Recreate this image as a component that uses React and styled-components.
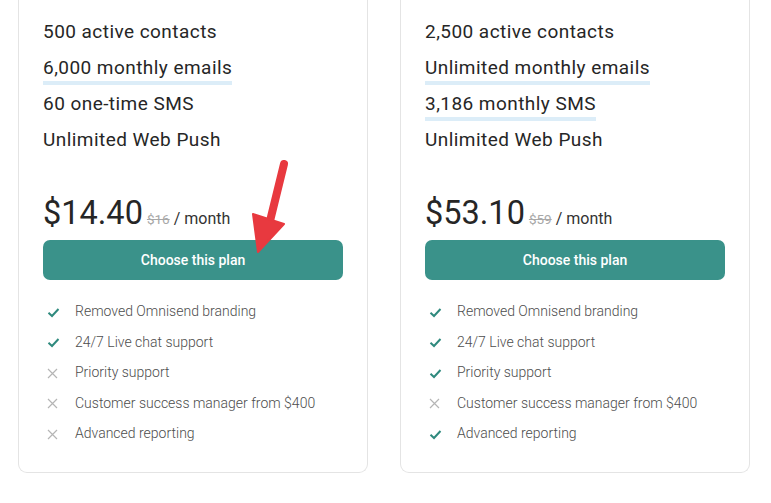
import React from "react";
import styled, { createGlobalStyle } from "styled-components";

const Global = createGlobalStyle`
  body {
    margin: 0;
    background: #ffffff;
    font-family: Roboto, "Noto Sans", Arial, sans-serif;
  }
`;

const Page = styled.div`
  position: relative;
  display: flex;
  gap: 32px;
  padding: 0 0 0 18px;
  width: 771px;
  height: 503px;
  box-sizing: border-box;
`;

const Card = styled.div`
  width: 350px;
  height: 473px;
  box-sizing: border-box;
  border: 1px solid #e4e4e4;
  border-top: none;
  border-radius: 0 0 9px 9px;
  padding: 14px 24px 0 24px;
  display: flex;
  flex-direction: column;
`;

const Limits = styled.div`
  display: flex;
  flex-direction: column;
`;

const Limit = styled.div`
  height: 36px;
  line-height: 36px;
  font-size: 19px;
  letter-spacing: 0.45px;
  color: #262626;
`;

const Marked = styled.span`
  display: inline-block;
  line-height: 22px;
  padding-bottom: 2px;
  border-bottom: 4px solid #dcedf8;
`;

const PriceRow = styled.div`
  display: flex;
  align-items: baseline;
  margin-top: 36px;
  height: 46px;
  color: #262626;
`;

const Price = styled.span`
  font-size: 32.5px;
  margin-right: 4px;
`;

const OldPrice = styled.span`
  font-size: 13.5px;
  color: #a8a8a8;
  text-decoration: line-through;
  margin-right: 4px;
`;

const Period = styled.span`
  font-size: 16px;
  color: #333;
`;

const Button = styled.div`
  height: 40px;
  width: 300px;
  border-radius: 7px;
  background: #3a928a;
  color: #ffffff;
  font-size: 14px;
  font-weight: 500;
  display: flex;
  align-items: center;
  justify-content: center;
`;

const Features = styled.ul`
  list-style: none;
  margin: 16px 0 0 0;
  padding: 0 0 0 4px;
`;

const Feature = styled.li`
  display: flex;
  align-items: center;
  height: 30.5px;
  font-size: 14px;
  font-weight: 300;
  color: #4d4d4d;
`;

const IconBox = styled.span`
  width: 28px;
  display: flex;
  align-items: center;
  padding-top: 2px;
`;

const Arrow = styled.svg`
  position: absolute;
  left: 245px;
  top: 155px;
`;

const Check = () => (
  <svg width="13" height="11" viewBox="0 0 13 11">
    <path d="M1.5 5.8 L5 9 L11.5 2" fill="none" stroke="#2f8a7e" strokeWidth="2" />
  </svg>
);

const Cross = () => (
  <svg width="11" height="11" viewBox="0 0 11 11">
    <path d="M1 1 L10 10 M10 1 L1 10" fill="none" stroke="#b5b5b5" strokeWidth="1.2" />
  </svg>
);

const plans = [
  {
    limits: [
      { text: "500 active contacts" },
      { text: "6,000 monthly emails", mark: true },
      { text: "60 one-time SMS" },
      { text: "Unlimited Web Push" },
    ],
    price: "$14.40",
    old: "$16",
    features: [
      ["Removed Omnisend branding", true],
      ["24/7 Live chat support", true],
      ["Priority support", false],
      ["Customer success manager from $400", false],
      ["Advanced reporting", false],
    ],
  },
  {
    limits: [
      { text: "2,500 active contacts" },
      { text: "Unlimited monthly emails", mark: true },
      { text: "3,186 monthly SMS", mark: true },
      { text: "Unlimited Web Push" },
    ],
    price: "$53.10",
    old: "$59",
    features: [
      ["Removed Omnisend branding", true],
      ["24/7 Live chat support", true],
      ["Priority support", true],
      ["Customer success manager from $400", false],
      ["Advanced reporting", true],
    ],
  },
];

const App = () => {
  return (
    <Page>
      <Global />
      {plans.map((plan, i) => (
        <Card key={i}>
          <Limits>
            {plan.limits.map(l => (
              <Limit key={l.text}>
                {l.mark ? <Marked>{l.text}</Marked> : l.text}
              </Limit>
            ))}
          </Limits>
          <PriceRow>
            <Price>{plan.price}</Price>
            <OldPrice>{plan.old}</OldPrice>
            <Period>/ month</Period>
          </PriceRow>
          <Button>Choose this plan</Button>
          <Features>
            {plan.features.map(([text, on]) => (
              <Feature key={text}>
                <IconBox>{on ? <Check /> : <Cross />}</IconBox>
                {text}
              </Feature>
            ))}
          </Features>
        </Card>
      ))}
      <Arrow width="60" height="105" viewBox="0 0 60 105">
        <path d="M39 9 L25 66" stroke="#e8393f" strokeWidth="8" strokeLinecap="round" fill="none" />
        <path d="M8 59 L39 69 L13 97 Z" fill="#e8393f" stroke="#e8393f" strokeWidth="2" strokeLinejoin="round" />
      </Arrow>
    </Page>
  );
};

export default App;
